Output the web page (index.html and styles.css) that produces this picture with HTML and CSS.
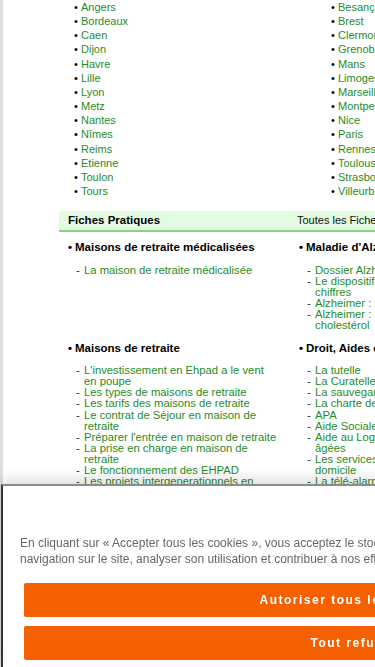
FILE: index.html
```html
<!DOCTYPE html>
<html lang="fr">
<head>
<meta charset="utf-8">
<title>Maisons de retraite</title>
<link rel="stylesheet" href="styles.css">
</head>
<body>
<div class="page">
  <div class="cities">
    <ul class="city-col">
      <li>Angers</li><li>Bordeaux</li><li>Caen</li><li>Dijon</li><li>Havre</li><li>Lille</li><li>Lyon</li><li>Metz</li><li>Nantes</li><li>Nîmes</li><li>Reims</li><li>Etienne</li><li>Toulon</li><li>Tours</li>
    </ul>
    <ul class="city-col">
      <li>Besançon</li><li>Brest</li><li>Clermont-Ferrand</li><li>Grenoble</li><li>Mans</li><li>Limoges</li><li>Marseille</li><li>Montpellier</li><li>Nice</li><li>Paris</li><li>Rennes</li><li>Toulouse</li><li>Strasbourg</li><li>Villeurbanne</li>
    </ul>
  </div>

  <div class="fiches-bar">
    <span class="bar-title">Fiches Pratiques</span>
    <span class="bar-link">Toutes les Fiches Pratiques</span>
  </div>

  <div class="cats">
    <div class="cat">
      <h3 class="cat-title">Maisons de retraite médicalisées</h3>
      <ul class="cat-list">
        <li>La maison de retraite médicalisée</li>
      </ul>
    </div>
    <div class="cat">
      <h3 class="cat-title">Maladie d'Alzheimer</h3>
      <ul class="cat-list">
        <li>Dossier Alzheimer</li>
        <li>Le dispositif Alzheimer : les grands chiffres</li>
        <li>Alzheimer : les symptômes</li>
        <li>Alzheimer : un lien avec le taux de cholestérol</li>
      </ul>
    </div>
    <div class="cat">
      <h3 class="cat-title">Maisons de retraite</h3>
      <ul class="cat-list">
        <li>L'investissement en Ehpad a le vent en poupe</li>
        <li>Les types de maisons de retraite</li>
        <li>Les tarifs des maisons de retraite</li>
        <li>Le contrat de Séjour en maison de retraite</li>
        <li>Préparer l'entrée en maison de retraite</li>
        <li>La prise en charge en maison de retraite</li>
        <li>Le fonctionnement des EHPAD</li>
        <li>Les projets intergenerationnels en maison de retraite</li>
      </ul>
    </div>
    <div class="cat">
      <h3 class="cat-title">Droit, Aides et Allocations</h3>
      <ul class="cat-list">
        <li>La tutelle</li>
        <li>La Curatelle</li>
        <li>La sauvegarde de justice</li>
        <li>La charte des droits</li>
        <li>APA</li>
        <li>Aide Sociale</li>
        <li>Aide au Logement des personnes âgées</li>
        <li>Les services de soins infirmiers à domicile</li>
        <li>La télé-alarme</li>
      </ul>
    </div>
  </div>
</div>

<div class="cookie">
  <p class="cookie-text">En cliquant sur « Accepter tous les cookies », vous acceptez le stockage de cookies sur votre appareil pour améliorer la navigation sur le site, analyser son utilisation et contribuer à nos efforts de marketing.</p>
  <div class="cookie-actions">
    <button class="cookie-btn">Autoriser tous les cookies</button>
    <button class="cookie-btn">Tout refuser</button>
  </div>
</div>
</body>
</html>
```

FILE: styles.css
```css
html, body {
  margin: 0;
  padding: 0;
  overflow: hidden;
  background: #fff;
}

body {
  font-family: "Liberation Sans", Arial, sans-serif;
  font-size: 11px;
  color: #000;
}

.page {
  width: 720px;
  min-height: 667px;
  border-left: 3px solid #dedede;
}

ul {
  list-style: none;
  margin: 0;
  padding: 0;
}

/* city list */
.cities {
  display: grid;
  grid-template-columns: 257px 257px;
  padding-left: 71px;
}

.city-col li {
  line-height: 14.15px;
  color: #1f8c1f;
  white-space: nowrap;
  display: flex;
}

.city-col li::before {
  content: "•";
  color: #000;
  width: 7px;
  flex-shrink: 0;
}

/* fiches bar */
.fiches-bar {
  margin: 13px 0 0 56px;
  width: 620px;
  height: 19px;
  line-height: 19px;
  background: #e3fbe1;
  border-bottom: 2px solid #86d386;
  display: grid;
  grid-template-columns: 238px auto;
}

.bar-title {
  font-weight: bold;
  font-size: 11.5px;
  padding-left: 9px;
}

.bar-link {
  color: #111;
}

/* categories */
.cats {
  display: grid;
  grid-template-columns: 231px 231px;
  margin-left: 65px;
  padding-top: 9px;
}

.cat {
  margin-bottom: 10px;
}

.cat-title {
  margin: 0;
  font-size: 11.5px;
  line-height: 12px;
  font-weight: bold;
  display: flex;
  white-space: nowrap;
}

.cat-title::before {
  content: "•";
  width: 7px;
  flex-shrink: 0;
}

.cat-list {
  margin-top: 11.4px;
  padding-left: 8px;
  width: 202px;
}

.cat-list li {
  display: flex;
  font-size: 11.25px;
  line-height: 11.15px;
  color: #1f8c1f;
}

.cat-list li::before {
  content: "-";
  color: #333;
  width: 8px;
  flex-shrink: 0;
}

/* cookie banner */
.cookie {
  position: fixed;
  left: 1px;
  bottom: 0;
  width: 702px;
  height: 183px;
  box-sizing: border-box;
  background: #fff;
  border-top: 2px solid #8c8c8c;
  border-left: 2px solid #333;
  box-shadow: 0 -6px 12px rgba(0, 0, 0, 0.12);
  padding: 49px 0 0 17px;
}

.cookie-text {
  margin: 0;
  width: 670px;
  font-size: 12px;
  line-height: 16px;
  color: #666;
}

.cookie-actions {
  display: flex;
  flex-direction: column;
  gap: 9px;
  margin: 16px 0 0 4px;
}

.cookie-btn {
  width: 660px;
  height: 34px;
  border: 0;
  border-radius: 2px;
  background: #f56100;
  color: #fff;
  font-family: "Liberation Sans", Arial, sans-serif;
  font-size: 12px;
  font-weight: bold;
  letter-spacing: 1.5px;
  padding: 0;
}
```
